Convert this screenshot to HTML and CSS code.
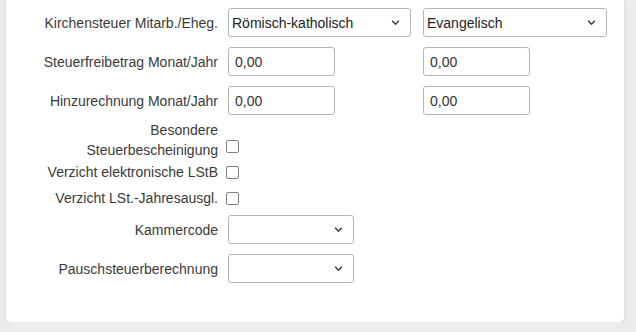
FILE: index.html
```html
<!DOCTYPE html>
<html lang="de">
<head>
  <meta charset="UTF-8" />
  <meta name="viewport" content="width=device-width, initial-scale=1.0"/>
  <title>Steuerdaten</title>
  <link rel="stylesheet" href="styles.css">
</head>
<body>
  <div class="card">

    <!-- Kirchensteuer -->
    <div class="row row-field">
      <label class="label">Kirchensteuer Mitarb./Eheg.</label>
      <div class="select-wrap wide">
        <select><option>Römisch-katholisch</option></select>
        <svg class="chevron" viewBox="0 0 10 6"><path d="M1 1l4 4 4-4"/></svg>
      </div>
      <div class="select-wrap wide">
        <select><option>Evangelisch</option></select>
        <svg class="chevron" viewBox="0 0 10 6"><path d="M1 1l4 4 4-4"/></svg>
      </div>
    </div>

    <div class="row row-field">
      <label class="label">Steuerfreibetrag Monat/Jahr</label>
      <div class="col"><input class="text-input" value="0,00" /></div>
      <div class="col"><input class="text-input" value="0,00" /></div>
    </div>

    <div class="row row-field">
      <label class="label">Hinzurechnung Monat/Jahr</label>
      <div class="col"><input class="text-input" value="0,00" /></div>
      <div class="col"><input class="text-input" value="0,00" /></div>
    </div>

    <!-- Checkboxen -->
    <div class="row row-two-line">
      <label class="label">Besondere<br>Steuerbescheinigung</label>
      <input type="checkbox" class="check check-low" />
    </div>

    <div class="row row-check">
      <label class="label">Verzicht elektronische LStB</label>
      <input type="checkbox" class="check" />
    </div>

    <div class="row row-check row-check-last">
      <label class="label">Verzicht LSt.-Jahresausgl.</label>
      <input type="checkbox" class="check" />
    </div>

    <!-- Codes -->
    <div class="row row-field">
      <label class="label">Kammercode</label>
      <div class="select-wrap short">
        <select><option></option></select>
        <svg class="chevron" viewBox="0 0 10 6"><path d="M1 1l4 4 4-4"/></svg>
      </div>
    </div>

    <div class="row row-field">
      <label class="label">Pauschsteuerberechnung</label>
      <div class="select-wrap short">
        <select><option></option></select>
        <svg class="chevron" viewBox="0 0 10 6"><path d="M1 1l4 4 4-4"/></svg>
      </div>
    </div>

  </div>
</body>
</html>
```

FILE: styles.css
```css
body { margin: 0; background: #ececec; font-family: "Liberation Sans", Arial, sans-serif; font-size: 14px; color: #3a3a3a; }

.card {
  background: #fff;
  margin: 0 12px 0 6px;
  padding: 8px 0 29px;
  border-radius: 0 0 5px 5px;
  box-shadow: 0 1px 4px rgba(0, 0, 0, 0.12);
}

.row { display: flex; align-items: center; }
.row-field { height: 29px; margin-bottom: 10px; }
.row-field + .row-two-line { margin-top: -5px; }
.row-two-line { height: 40px; line-height: 20px; align-items: flex-end; margin-bottom: 2px; }
.row-check { height: 20px; line-height: 20px; margin-bottom: 6px; }
.row-check-last { margin-bottom: 7px; }

.label { width: 212px; margin-right: 10px; text-align: right; flex-shrink: 0; }

/* Selects */
.select-wrap { position: relative; height: 29px; margin-right: 12px; }
.select-wrap.wide { width: 183px; }
.select-wrap.wide + .select-wrap.wide { width: 184px; }
.select-wrap.short { width: 126px; }
.select-wrap select {
  appearance: none;
  -webkit-appearance: none;
  width: 100%;
  height: 100%;
  margin: 0;
  padding: 0 24px 0 3px;
  border: 1px solid #b5b5b5;
  border-radius: 3px;
  background: #fff;
  font: inherit;
  color: #222;
}
.chevron {
  position: absolute;
  right: 11px;
  top: 12px;
  width: 9px;
  height: 5px;
  fill: none;
  stroke: #333;
  stroke-width: 1.7;
  pointer-events: none;
}

/* Inputs */
.col { width: 195px; }
.text-input {
  box-sizing: border-box;
  width: 107px;
  height: 29px;
  margin: 0;
  padding: 0 6px;
  border: 1px solid #b5b5b5;
  border-radius: 3px;
  font: inherit;
  color: #333;
}

/* Checkboxen */
.check {
  appearance: none;
  -webkit-appearance: none;
  width: 13px;
  height: 13px;
  margin: 0 0 0 -2px;
  border: 1px solid #808080;
  border-radius: 2px;
  background: #fff;
}
.check-low { margin-bottom: 7px; }
```
